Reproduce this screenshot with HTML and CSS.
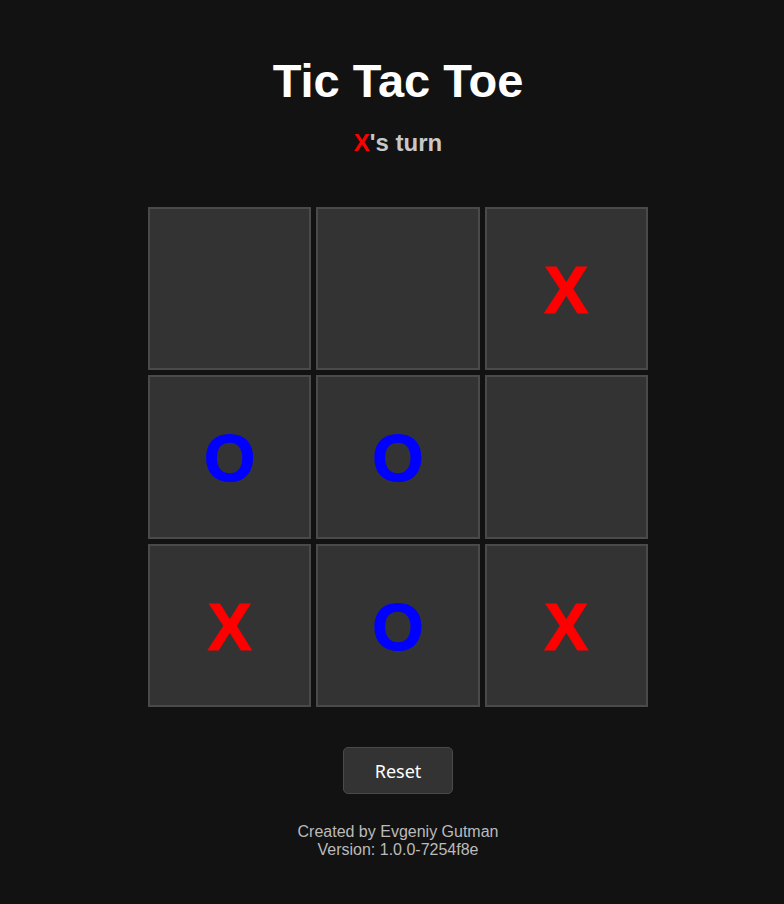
FILE: index.html
```html
<!DOCTYPE html>
<html lang="en">
<head>
<meta charset="utf-8">
<title>Tic Tac Toe</title>
<link rel="stylesheet" href="styles.css">
</head>
<body>
<main class="app">
  <h1 class="title">Tic Tac Toe</h1>
  <div class="status"><span class="x">X</span>'s turn</div>
  <div class="board">
    <div class="cell"></div>
    <div class="cell"></div>
    <div class="cell x">X</div>
    <div class="cell o">O</div>
    <div class="cell o">O</div>
    <div class="cell"></div>
    <div class="cell x">X</div>
    <div class="cell o">O</div>
    <div class="cell x">X</div>
  </div>
  <button class="reset" type="button">Reset</button>
  <footer class="footer">
    <div>Created by Evgeniy Gutman</div>
    <div>Version: 1.0.0-7254f8e</div>
  </footer>
</main>
</body>
</html>
```
FILE: styles.css
```css
html, body {
  margin: 0;
  padding: 0;
  background: #121212;
}
body {
  font-family: "Liberation Sans", Arial, sans-serif;
  color: #fff;
}
.app {
  display: flex;
  flex-direction: column;
  align-items: center;
  padding-top: 53px;
  padding-left: 12px;
}
.title {
  margin: 0;
  font-size: 47px;
  line-height: 56px;
  font-weight: bold;
  color: #fff;
}
.status {
  margin-top: 20px;
  font-size: 24px;
  line-height: 28px;
  font-weight: bold;
  color: #c8c8c8;
}
.x {
  color: #ff0000;
}
.o {
  color: #0000ff;
}
.board {
  margin-top: 50px;
  width: 500px;
  height: 500px;
  display: grid;
  grid-template-columns: repeat(3, 1fr);
  grid-template-rows: repeat(3, 1fr);
  gap: 5px;
}
.cell {
  box-sizing: border-box;
  background: #333333;
  border: 2px solid #4a4a4a;
  display: flex;
  align-items: center;
  justify-content: center;
  padding-top: 3px;
  font-size: 66px;
  font-weight: bold;
  line-height: 1;
  -webkit-text-stroke: 1.2px currentColor;
}
.reset {
  margin-top: 40px;
  width: 110px;
  height: 47px;
  background: #333333;
  border: 1px solid #4a4a4a;
  border-radius: 5px;
  color: #fff;
  font-family: "Noto Sans", "Open Sans", sans-serif;
  font-size: 18px;
  padding: 0;
}
.footer {
  margin-top: 29px;
  text-align: center;
  font-size: 16px;
  line-height: 18px;
  color: #bbbbbb;
}
```
